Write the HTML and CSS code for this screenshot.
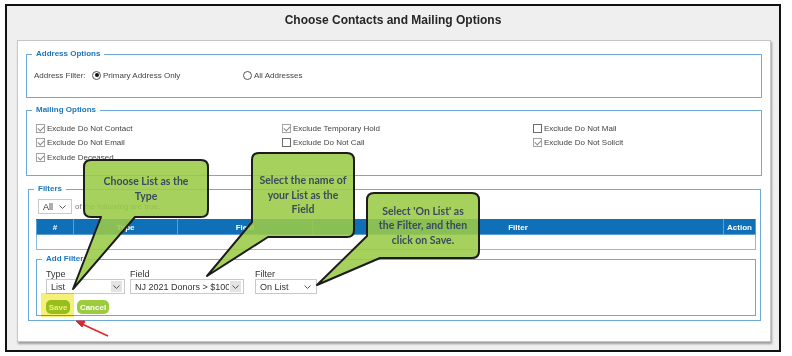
FILE: index.html
```html
<!DOCTYPE html>
<html>
<head>
<meta charset="utf-8">
<link rel="stylesheet" href="styles.css">
</head>
<body>
<div class="page">
  <div class="frame">
    <h1 class="title">Choose Contacts and Mailing Options</h1>
    <div class="card">
      <fieldset class="fs fs-address">
        <legend>Address Options</legend>
        <div class="addr-row">
          <span class="lbl">Address Filter:</span>
          <label class="opt"><span class="radio on"></span>Primary Address Only</label>
          <label class="opt"><span class="radio"></span>All Addresses</label>
        </div>
      </fieldset>
      <fieldset class="fs fs-mail">
        <legend>Mailing Options</legend>
        <div class="mail-grid">
          <label class="opt"><span class="cb on"></span>Exclude Do Not Contact</label>
          <label class="opt"><span class="cb on"></span>Exclude Temporary Hold</label>
          <label class="opt"><span class="cb"></span>Exclude Do Not Mail</label>
          <label class="opt"><span class="cb on"></span>Exclude Do Not Email</label>
          <label class="opt"><span class="cb"></span>Exclude Do Not Call</label>
          <label class="opt"><span class="cb on"></span>Exclude Do Not Solicit</label>
          <label class="opt"><span class="cb on"></span>Exclude Deceased</label>
        </div>
      </fieldset>
      <fieldset class="fs fs-filters">
        <legend>Filters</legend>
        <div class="match-row">
          <div class="sel sel-all">All<svg class="chev" width="7" height="4" viewBox="0 0 7 4"><polyline points="0.5,0.5 3.5,3.5 6.5,0.5" fill="none" stroke="#555" stroke-width="1"/></svg></div>
          <span class="match-txt">of the following are true.</span>
        </div>
        <table class="ftable">
          <colgroup><col class="c1"><col class="c2"><col class="c3"><col class="c4"><col class="c5"></colgroup>
          <thead><tr><th>#</th><th>Type</th><th>Field</th><th>Filter</th><th>Action</th></tr></thead>
          <tbody><tr><td></td><td></td><td></td><td></td><td></td></tr></tbody>
        </table>
        <fieldset class="fs fs-add">
          <legend>Add Filter</legend>
          <div class="add-row">
            <div class="field f-type">
              <div class="flbl">Type</div>
              <div class="sel">List<span class="abox"><svg width="7" height="4" viewBox="0 0 7 4"><polyline points="0.5,0.5 3.5,3.5 6.5,0.5" fill="none" stroke="#555" stroke-width="1"/></svg></span></div>
            </div>
            <div class="field f-field">
              <div class="flbl">Field</div>
              <div class="sel"><span class="clip">NJ 2021 Donors &gt; $1000</span><span class="abox"><svg width="7" height="4" viewBox="0 0 7 4"><polyline points="0.5,0.5 3.5,3.5 6.5,0.5" fill="none" stroke="#555" stroke-width="1"/></svg></span></div>
            </div>
            <div class="field f-filter">
              <div class="flbl">Filter</div>
              <div class="sel">On List<svg class="chev" width="7" height="4" viewBox="0 0 7 4"><polyline points="0.5,0.5 3.5,3.5 6.5,0.5" fill="none" stroke="#555" stroke-width="1"/></svg></div>
            </div>
          </div>
          <div class="btns">
            <button class="btn btn-save">Save</button>
            <button class="btn btn-cancel">Cancel</button>
          </div>
        </fieldset>
      </fieldset>
    </div>
  </div>

  <div class="highlight"></div>

  <svg class="overlay" width="792" height="356" viewBox="0 0 792 356">
    <g fill="#9bcb47" fill-opacity="0.88" stroke="#1c1c1c" stroke-width="2" stroke-linejoin="round">
      <path d="M91 160 H201 Q208 160 208 167 V210 Q208 217 201 217 H135 L73 289 L101 217 H91 Q84 217 84 210 V167 Q84 160 91 160 Z"/>
      <path d="M259 153 H347 Q354 153 354 160 V230 Q354 237 347 237 H268 L207 276 L252 222 V160 Q252 153 259 153 Z"/>
      <path d="M374 193 H472 Q479 193 479 200 V251 Q479 258 472 258 H380 L317 285 L367 236 V200 Q367 193 374 193 Z"/>
    </g>
    <g stroke="#e0262b" stroke-width="1.6" fill="#e0262b">
      <line x1="108" y1="336" x2="82" y2="324"/>
      <polygon points="76,321 85,321 82,327" stroke-width="1"/>
    </g>
  </svg>

  <div class="callout co1">Choose List as the<br>Type</div>
  <div class="callout co2">Select the name of<br>your List as the<br>Field</div>
  <div class="callout co3">Select 'On List' as<br>the Filter, and then<br>click on Save.</div>
</div>
</body>
</html>
```

FILE: styles.css
```css
* { box-sizing: border-box; }
html, body { margin: 0; background: #fff; }
body { font-family: "Liberation Sans", Arial, sans-serif; color: #333; }

.page { position: relative; width: 792px; height: 356px; overflow: hidden; padding: 4px 0 0 5px; }

.frame { width: 776px; height: 348px; border: 2px solid #111; background: #efefef; }

.title { margin: 0; height: 34px; line-height: 28px; text-align: center; font-size: 12px; font-weight: bold; color: #262626; }

.card {
  margin-left: 10px; width: 754px; height: 302px; background: #fff;
  border: 1px solid #c6c6c6; box-shadow: 1px 2px 2px rgba(0,0,0,0.35);
  padding: 8px 8px 0 8px;
}

.fs { border: 1px solid #6ea9d8; margin: 0; min-width: 0; padding: 0 7px; }
legend { font-size: 8px; line-height: 10px; font-weight: bold; color: #1b76bd; padding: 0 4px; margin-left: -2px; }

.fs-address { padding-top: 10px; padding-bottom: 16px; }
.addr-row { display: grid; grid-template-columns: 58px 151px auto; height: 12px; align-items: center; font-size: 8px; color: #444; }
.opt { display: flex; align-items: center; font-size: 8px; color: #444; white-space: nowrap; }

.radio { width: 9px; height: 9px; border: 1px solid #555; border-radius: 50%; margin-right: 2px; position: relative; background: #fff; }
.radio.on::after { content: ""; position: absolute; left: 1.5px; top: 1.5px; width: 4px; height: 4px; border-radius: 50%; background: #111; }

.fs-mail { margin-top: 7px; padding-top: 6px; padding-bottom: 10.5px; }
.mail-grid { display: grid; grid-template-columns: 246px 251px auto; grid-auto-rows: 14.5px; align-items: center; padding-left: 2px; }

.cb { width: 9px; height: 9px; border: 1px solid #6a6a6a; margin-right: 2px; background: #fff; position: relative; }
.cb.on { border-color: #a2a2a2; }
.cb.on::after { content: ""; position: absolute; left: 2px; top: 0px; width: 3px; height: 5px; border: solid #8a8a8a; border-width: 0 1px 1px 0; transform: rotate(45deg); }

.fs-filters { margin: 8px 1px 0 2px; padding: 5px 3px 4px 7px; }
.match-row { display: flex; align-items: center; height: 15px; }
.sel { position: relative; height: 15px; border: 1px solid #c9c9c9; background: #fff; font-size: 9px; color: #333; display: flex; align-items: center; padding-left: 4px; white-space: nowrap; }
.sel-all { width: 34px; margin-left: 2px; }
.chev { position: absolute; right: 5px; top: 5px; }
.match-txt { margin-left: 3px; font-size: 8px; color: #777; }

.ftable { margin-top: 5px; width: 719px; border-collapse: collapse; table-layout: fixed; }
.c1 { width: 37px; } .c2 { width: 104px; } .c3 { width: 135px; } .c4 { width: 411px; } .c5 { width: 32px; }
.ftable th { height: 15px; padding: 0; background: #0f6fb7; color: #fff; font-size: 8px; font-weight: bold; text-align: center; border: 1px solid #5e9fd3; border-top-color: #0f6fb7; }
.ftable td { height: 15px; padding: 0; border-left: 0; border-right: 0; border-bottom: 1px solid #8cbbe0; }
.ftable tbody tr td:first-child { border-left: 1px solid #8cbbe0; }
.ftable tbody tr td:last-child { border-right: 1px solid #8cbbe0; }

.fs-add { margin: 4px 1px 0 0; padding-top: 5px; padding-bottom: 1px; }
.add-row { display: flex; padding-left: 2px; }
.flbl { font-size: 9px; line-height: 10px; color: #333; }
.f-type { width: 79px; }
.f-field { width: 114px; margin-left: 5px; }
.f-filter { width: 62px; margin-left: 11px; }
.clip { overflow: hidden; width: 94px; }
.abox { position: absolute; right: 2px; top: 1px; width: 11px; height: 11px; background: #e3e3e3; display: flex; align-items: center; justify-content: center; }

.btns { display: flex; margin-top: 6px; padding-left: 2px; }
.btn { height: 14px; border: 0; border-radius: 5px; padding: 0; font-family: "Liberation Sans", Arial, sans-serif; font-size: 8px; font-weight: bold; color: #fff; background: #9ccb3d; }
.btn-save { width: 24px; }
.btn-cancel { width: 32px; margin-left: 7px; }

.highlight { position: absolute; left: 41px; top: 293px; width: 33px; height: 24px; background: #f6ef78; mix-blend-mode: multiply; }

.overlay { position: absolute; left: 0; top: 0; pointer-events: none; }

.callout {
  position: absolute; display: flex; align-items: center; justify-content: center; text-align: center;
  font-family: Lato, "Open Sans", sans-serif; font-weight: bold; font-size: 10.5px; line-height: 14.5px; color: #3a4b5d;
}
.co1 { left: 84px; top: 160px; width: 124px; height: 57px; }
.co2 { left: 252px; top: 153px; width: 102px; height: 84px; }
.co3 { left: 367px; top: 193px; width: 112px; height: 65px; }
```
